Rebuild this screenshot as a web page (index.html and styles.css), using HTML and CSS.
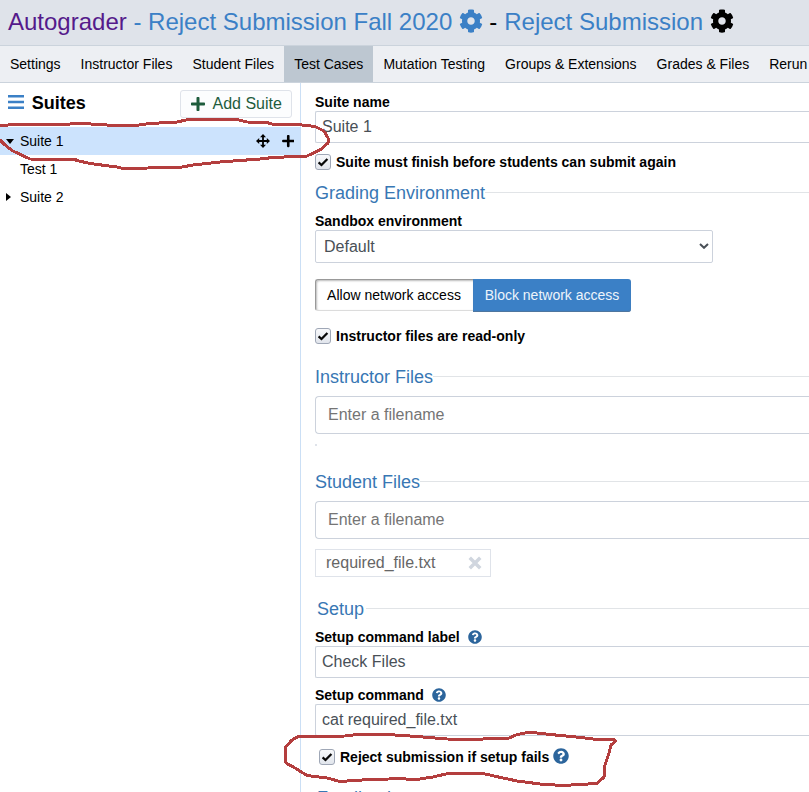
FILE: index.html
```html
<!DOCTYPE html>
<html lang="en">
<head>
<meta charset="utf-8">
<title>Autograder - Reject Submission</title>
<link rel="stylesheet" href="styles.css">
</head>
<body>
<svg class="sprite" aria-hidden="true">
  <symbol id="cog" viewBox="0 0 512 512"><path d="M487.400 315.700l-42.600-24.600c4.300-23.200 4.300-47 0-70.200l42.600-24.600c4.900-2.800 7.100-8.600 5.500-14-11.100-35.600-30-67.800-54.700-94.600-3.800-4.100-10-5.100-14.800-2.300L380.800 110c-17.900-15.400-38.500-27.300-60.800-35.100V25.800c0-5.600-3.900-10.500-9.400-11.700-36.700-8.200-74.300-7.800-109.200 0-5.500 1.200-9.400 6.100-9.400 11.700V75c-22.200 7.900-42.800 19.800-60.800 35.100L88.700 85.500c-4.900-2.800-11-1.900-14.800 2.300-24.700 26.700-43.600 58.900-54.700 94.600-1.700 5.400.6 11.200 5.500 14L67.300 221c-4.300 23.200-4.300 47 0 70.200l-42.600 24.600c-4.900 2.800-7.100 8.600-5.500 14 11.100 35.600 30 67.800 54.700 94.600 3.800 4.100 10 5.100 14.800 2.300l42.600-24.600c17.900 15.400 38.500 27.300 60.800 35.100v49.200c0 5.600 3.900 10.500 9.400 11.700 36.700 8.200 74.300 7.800 109.200 0 5.500-1.200 9.400-6.100 9.400-11.700v-49.200c22.200-7.900 42.800-19.800 60.800-35.100l42.600 24.600c4.900 2.800 11 1.900 14.800-2.300 24.700-26.700 43.600-58.900 54.700-94.600 1.500-5.500-.7-11.300-5.600-14.100zM256 336c-44.100 0-80-35.900-80-80s35.900-80 80-80 80 35.900 80 80-35.900 80-80 80z"/></symbol>
  <symbol id="plus" viewBox="0 0 448 512"><path d="M416 208H272V64c0-17.670-14.330-32-32-32h-32c-17.670 0-32 14.330-32 32v144H32c-17.670 0-32 14.330-32 32v32c0 17.670 14.330 32 32 32h144v144c0 17.670 14.330 32 32 32h32c17.670 0 32-14.330 32-32V304h144c17.670 0 32-14.330 32-32v-32c0-17.670-14.330-32-32-32z"/></symbol>
  <symbol id="help" viewBox="0 0 512 512"><path d="M504 256c0 136.997-111.043 248-248 248S8 392.997 8 256C8 119.083 119.043 8 256 8s248 111.083 248 248zM262.655 90c-54.497 0-89.255 22.957-116.549 63.758-3.536 5.286-2.353 12.415 2.715 16.258l34.699 26.310c5.205 3.947 12.621 3.008 16.665-2.122 17.864-22.658 30.113-35.797 57.303-35.797 20.429 0 45.698 13.148 45.698 32.958 0 14.976-12.363 22.667-32.534 33.976C247.128 238.528 216 254.941 216 296v4c0 6.627 5.373 12 12 12h56c6.627 0 12-5.373 12-12v-1.333c0-28.462 83.186-29.647 83.186-106.667 0-58.002-60.165-102-116.531-102zM256 338c-25.365 0-46 20.635-46 46 0 25.364 20.635 46 46 46s46-20.636 46-46c0-25.365-20.635-46-46-46z"/></symbol>
  <symbol id="move" viewBox="0 0 14 14"><path d="M7 0l3 3.200H7.900v2.900h2.900V4L14 7l-3.200 3V7.900H7.900v2.900H10L7 14l-3-3.200h2.100V7.900H3.200V10L0 7l3.200-3v2.100h2.900V3.200H4z"/></symbol>
  <symbol id="check" viewBox="0 0 14 14"><path d="M2.600 7.300l2.900 2.700 5.900-6" fill="none" stroke="#080808" stroke-width="2.300"/></symbol>
</svg>

<header class="title">
  <span class="visited">Autograder</span><span class="link">&nbsp;- Reject Submission Fall 2020</span>
  <svg class="cog link"><use href="#cog"/></svg>
  <span class="sep">-</span>
  <span class="link">Reject Submission</span>
  <svg class="cog"><use href="#cog"/></svg>
</header>

<nav class="tabs">
  <a>Settings</a><a>Instructor Files</a><a>Student Files</a><a class="active">Test Cases</a><a>Mutation Testing</a><a>Groups &amp; Extensions</a><a>Grades &amp; Files</a><a class="last">Rerun</a>
</nav>

<main class="layout">
  <aside class="sidebar">
    <div class="side-head">
      <svg class="bars" viewBox="0 0 16 15"><path d="M0 0h16v2.500H0zM0 5.800h16v2.500H0zM0 11.600h16v2.500H0z"/></svg>
      <h2>Suites</h2>
      <button class="add"><svg><use href="#plus"/></svg>Add Suite</button>
    </div>
    <div class="row selected"><span class="caret down"></span><span class="name">Suite 1</span><svg class="move"><use href="#move"/></svg><svg class="plus"><use href="#plus"/></svg></div>
    <div class="row"><span class="caret"></span><span class="name">Test 1</span></div>
    <div class="row"><span class="caret right"></span><span class="name">Suite 2</span></div>
  </aside>

  <section class="form">
    <label class="label raised">Suite name</label>
    <div class="input">Suite 1</div>
    <div class="check-row must-finish"><svg class="box"><use href="#check"/></svg>Suite must finish before students can submit again</div>
    <h3 class="legend grading">Grading Environment</h3>
    <label class="label raised">Sandbox environment</label>
    <div class="select">Default<svg viewBox="0 0 10 6"><path d="M1 1l4 3.800L9 1"/></svg></div>
    <div class="toggle"><span class="off">Allow network access</span><span class="on">Block network access</span></div>
    <div class="check-row readonly"><svg class="box"><use href="#check"/></svg>Instructor files are read-only</div>
    <h3 class="legend instructor">Instructor Files</h3>
    <div class="search">Enter a filename</div>
    <div class="empty-list"></div>
    <h3 class="legend student">Student Files</h3>
    <div class="search">Enter a filename</div>
    <div class="file">required_file.txt<svg viewBox="0 0 12 12"><path d="M1.500 1.500l9 9M10.500 1.500l-9 9"/></svg></div>
    <h3 class="legend setup">Setup</h3>
    <label class="label">Setup command label<svg class="help"><use href="#help"/></svg></label>
    <div class="input">Check Files</div>
    <label class="label command">Setup command<svg class="help"><use href="#help"/></svg></label>
    <div class="input">cat required_file.txt</div>
    <div class="check-row reject"><svg class="box"><use href="#check"/></svg>Reject submission if setup fails<svg class="help big"><use href="#help"/></svg></div>
    <h3 class="legend feedback">Feedback</h3>
  </section>
</main>

<svg class="marks" viewBox="0 0 809 792">
  <path d="M0 126L16 124 70 124 75 123 115 125.500 135 125.500 150 123.500 177 122 188 119.500 237 119.500 247 122 267 122.500 272 124 302 125 315 126.500 324 131 328 138 328 143 320 150 307 156 273 157.500 260 159 220 162 193 165 182 167 148 168 123 168.500 117 167 90 163.500 75 160 30 159 13 151 5 145 0 140M70 160L77 159"/>
  <path d="M298 736.500L345 736 357 734.500 387 734.500 417 736.500 447 739 470 739.500 509 738 517 734.500 528 732.500 537 733 560 735.500 572 736.500 593 739 615 740 615 742 611 745 609 753 605 765 604 777 597 783.500 563 785.500 540 784 517 781 503 778 483 773.500 448 773.500 433 777 413 780 402 778.500 362 780 340 781.500 327 778 307 775.500 295 768 286 763 285.500 747 292 740z"/>
</svg>
</body>
</html>
```
FILE: styles.css
```css
* { box-sizing: border-box; }
html, body { height: 100%; }
body {
  margin: 0;
  overflow: hidden;
  display: flex;
  flex-direction: column;
  background: #fff;
  color: #000;
  font-family: "Liberation Sans", Arial, sans-serif;
  font-size: 14px;
  position: relative;
}
svg { fill: currentColor; flex: none; }
.sprite { position: absolute; width: 0; height: 0; }

.title {
  flex: none;
  height: 46px;
  padding: 0 8px 2px;
  display: flex;
  align-items: center;
  font-size: 24px;
  white-space: nowrap;
  background: #dfe3ea;
  border-bottom: 1px solid #cbd3dc;
}
.visited { color: #551a8b; }
.link { color: #3b80c6; }
.cog { width: 24px; height: 24px; margin: 0 0 2px 7px; }
.sep { margin: 0 7px 0 6px; }

.tabs {
  flex: none;
  height: 37px;
  display: flex;
  background: #edeff3;
  border-bottom: 1px solid #cbd3dc;
  white-space: nowrap;
}
.tabs a { padding: 10px 10px 0; line-height: 16px; }
.tabs .last { padding-right: 0; }
.tabs .active { background: #bdc7d1; }

.layout { flex: 1; min-height: 0; display: flex; }
.sidebar { width: 301px; flex: none; border-right: 1px solid #cbdff5; }
.side-head { height: 44px; padding: 7px 8px 0; display: flex; }
.bars { width: 16px; height: 15px; margin-top: 5px; color: #3b80c6; }
.side-head h2 { margin: 2px 0 0 7.800px; font-size: 18px; line-height: 22px; flex: 1; }
.add {
  height: 28px;
  width: 112px;
  padding: 0 0 0 9.500px;
  display: flex;
  align-items: center;
  gap: 8px;
  border: 1px solid #dfe3ea;
  border-radius: 3px;
  background: #fcfdfe;
  color: #1e5c3c;
  font: 16px "Liberation Sans", Arial, sans-serif;
}
.add svg { width: 14px; height: 16px; margin-bottom: 1px; }
.row { height: 28px; display: flex; align-items: center; padding: 0 6px; }
.selected { background: #cce3fd; }
.name { flex: 1; }
.caret { width: 14px; }
.down::before, .right::before { content: ""; display: block; width: 0; border: 4px solid transparent; }
.down::before { border-width: 5px 4.500px 0; border-top-color: #000; }
.right::before { border-width: 4.500px 0 4.500px 5px; border-left-color: #000; }
.move { width: 14px; height: 14px; margin-right: 12px; }
.plus { width: 12.500px; height: 14px; }

.form { flex: 1; min-width: 0; padding: 11px 0 0 14px; }
.label { display: flex; align-items: center; height: 17px; font-weight: bold; }
.raised { padding-bottom: 2px; }
.help { width: 14px; height: 14px; margin-left: 8px; color: #2c659c; }
.help.big { width: 16px; height: 16px; margin: 0 0 2px 4px; }
.input {
  height: 32px;
  padding: 0 6px;
  border: 1px solid #ccd2dc;
  border-right: 0;
  border-radius: 2px 0 0 2px;
  font-size: 16px;
  line-height: 30px;
  color: #495057;
}
.check-row { display: flex; align-items: center; height: 18px; font-weight: bold; }
.must-finish { margin-top: 10px; }
.box {
  width: 16px;
  height: 16px;
  margin-right: 5px;
  border: 1px solid #9fa7b6;
  border-radius: 3px;
  background: linear-gradient(#f8f9fb, #e1e5ec);
}
.legend {
  display: flex;
  align-items: center;
  height: 20px;
  margin: 0;
  font-size: 18px;
  font-weight: normal;
  color: #3877b4;
}
.legend::after { content: ""; flex: 1; height: 1px; margin-bottom: 2px; background: #e1e4e7; }
.grading { margin: 12px 0 10px; }
.select {
  width: 398px;
  height: 33px;
  padding: 0 3px 0 8px;
  display: flex;
  align-items: center;
  justify-content: space-between;
  border: 1px solid #ccd2dc;
  border-radius: 2px;
  font-size: 16px;
  color: #495057;
}
.select svg { width: 10px; height: 6px; margin-bottom: 1px; fill: none; stroke: #495057; stroke-width: 2; }
.toggle { display: flex; height: 33px; margin-top: 16px; line-height: 32px; text-align: center; }
.off {
  width: 158px;
  height: 32px;
  padding-right: 1px;
  border: 1px solid #dcdcdc;
  border-right: 0;
  border-top-color: #999;
  border-left-color: #999;
  border-radius: 3px 0 0 3px;
  box-shadow: inset 1px 1px 2px #bbb;
  line-height: 30px;
}
.on { width: 158px; background: #3b80c6; color: #edf4fb; border-radius: 0 3px 3px 0; box-shadow: inset 0 -1px 1px #52759b; }
.readonly { margin-top: 15px; }
.instructor { margin: 22px 0 9px; }
.search {
  height: 38px;
  padding: 0 12px;
  border: 1px solid #ccd2dc;
  border-right: 0;
  border-radius: 4px 0 0 4px;
  font-size: 16px;
  line-height: 35px;
  color: #757575;
}
.empty-list { width: 2px; height: 2px; margin-top: 10px; background: #dfe3ea; }
.student { margin: 26px 0 9px; }
.file {
  width: 176px;
  height: 28px;
  margin-top: 10px;
  padding: 0 8px 1px 10px;
  display: flex;
  align-items: center;
  justify-content: space-between;
  border: 1px solid #dfe3ea;
  font-size: 16px;
  color: #666;
}
.file svg { width: 14px; height: 14px; stroke: #d0d6df; stroke-width: 3; }
.setup { margin: 22px 0 9px; padding-left: 2px; }
.setup::after { margin-left: 2px; }
.setup + .label { height: 18px; padding-bottom: 1px; }
.command { height: 18px; margin-top: 8px; padding-bottom: 1px; }
.reject { margin: 12px 0 0 4px; }
.feedback { margin-top: 22px; padding-left: 2px; }

.marks {
  position: absolute;
  left: 0;
  top: 0;
  width: 809px;
  height: 792px;
  fill: none;
  stroke: #b43e3e;
  stroke-width: 3;
  stroke-linejoin: round;
  shape-rendering: crispEdges;
  pointer-events: none;
}
```
